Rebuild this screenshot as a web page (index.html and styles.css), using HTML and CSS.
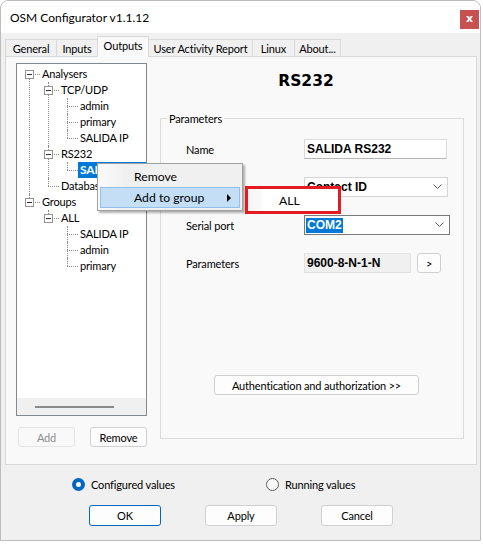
FILE: index.html
```html
<!DOCTYPE html>
<html>
<head>
<meta charset="utf-8">
<link rel="stylesheet" href="styles.css">
</head>
<body>
<div class="window">
  <div class="titlebar">
    <span class="title">OSM Configurator v1.1.12</span>
    <span class="close">x</span>
  </div>
  <div class="tabs">
    <div class="tab w-general">General</div>
    <div class="tab w-inputs">Inputs</div>
    <div class="tab w-outputs active">Outputs</div>
    <div class="tab w-uar">User Activity Report</div>
    <div class="tab w-linux">Linux</div>
    <div class="tab w-about">About...</div>
  </div>
  <div class="panel">
    <div class="left">
      <div class="tree">
        <div class="tree-content">
          <ul>
            <li><div class="row"><span class="exp"></span><span class="label">Analysers</span></div>
              <ul>
                <li><div class="row"><span class="exp"></span><span class="label">TCP/UDP</span></div>
                  <ul>
                    <li><div class="row"><span class="label">admin</span></div></li>
                    <li><div class="row"><span class="label">primary</span></div></li>
                    <li><div class="row"><span class="label">SALIDA IP</span></div></li>
                  </ul>
                </li>
                <li><div class="row"><span class="exp"></span><span class="label">RS232</span></div>
                  <ul>
                    <li><div class="row"><span class="label sel">SALIDA RS232</span></div></li>
                  </ul>
                </li>
                <li><div class="row"><span class="label">Database</span></div></li>
              </ul>
            </li>
            <li><div class="row"><span class="exp"></span><span class="label">Groups</span></div>
              <ul>
                <li><div class="row"><span class="exp"></span><span class="label">ALL</span></div>
                  <ul>
                    <li><div class="row"><span class="label">SALIDA IP</span></div></li>
                    <li><div class="row"><span class="label">admin</span></div></li>
                    <li><div class="row"><span class="label">primary</span></div></li>
                  </ul>
                </li>
              </ul>
            </li>
          </ul>
        </div>
        <div class="hscroll"><div class="thumb"></div></div>
      </div>
      <div class="left-buttons">
        <div class="btn small disabled">Add</div>
        <div class="btn small">Remove</div>
      </div>
    </div>
    <div class="right">
      <h1 class="heading">RS232</h1>
      <fieldset class="group">
        <legend>Parameters</legend>
        <div class="form">
          <div class="lbl">Name</div>
          <div class="input">SALIDA RS232</div>
          <div class="lbl">Protocol</div>
          <div class="combo"><span class="val">Contact ID</span><svg width="9" height="6" viewBox="0 0 9 6"><polyline points="0.5,0.5 4.5,4.5 8.5,0.5" fill="none" stroke="#606060" stroke-width="1"/></svg></div>
          <div class="lbl">Serial port</div>
          <div class="combo focus"><span class="val hl">COM2</span><svg width="9" height="6" viewBox="0 0 9 6"><polyline points="0.5,0.5 4.5,4.5 8.5,0.5" fill="none" stroke="#606060" stroke-width="1"/></svg></div>
          <div class="lbl">Parameters</div>
          <div class="param-row"><div class="ro">9600-8-N-1-N</div><div class="btn tiny">&gt;</div></div>
        </div>
        <div class="btn auth">Authentication and authorization &gt;&gt;</div>
      </fieldset>
    </div>
  </div>
  <div class="radios">
    <div class="radio-item first"><span class="radio on"></span><span>Configured values</span></div>
    <div class="radio-item"><span class="radio off"></span><span>Running values</span></div>
  </div>
  <div class="buttons">
    <div class="btn big default">OK</div>
    <div class="btn big">Apply</div>
    <div class="btn big">Cancel</div>
  </div>

  <div class="ctx">
    <div class="mi">Remove</div>
    <div class="mi hi">Add to group<span class="arrow"></span></div>
  </div>
  <div class="sub">
    <div class="sub-item">ALL</div>
  </div>
</div>
</body>
</html>
```

FILE: styles.css
```css
* { box-sizing: border-box; }
body {
  margin: 0;
  background: #fff;
  font-family: Lato, "Liberation Sans", sans-serif;
  font-size: 11px;
  letter-spacing: -0.15px;
  color: #000;
}
.window {
  position: relative;
  width: 481px;
  height: 541px;
  border: 1px solid #bcbcbc;
  border-radius: 8px 8px 0 0;
  background: #f0f0f0;
  overflow: hidden;
}
.titlebar {
  height: 32px;
  background: #fff;
  display: flex;
  justify-content: space-between;
  align-items: center;
  padding: 0 1px 0 9px;
}
.title { font-size: 12px; letter-spacing: 0; }
.close {
  align-self: flex-start;
  margin-top: 9px;
  width: 19px;
  height: 19px;
  background: #c75050;
  color: #fff;
  font: bold 11px "DejaVu Sans", sans-serif;
  display: flex;
  align-items: center;
  justify-content: center;
  padding-bottom: 2px;
}
.tabs {
  display: flex;
  align-items: flex-end;
  height: 23px;
  padding-left: 4px;
}
.tab {
  height: 17px;
  border: 1px solid #d9d9d9;
  border-bottom: none;
  margin-right: -1px;
  background: #f0f0f0;
  display: flex;
  align-items: center;
  justify-content: center;
  white-space: nowrap;
}
.tab.active {
  height: 21px;
  margin-bottom: -1px;
  background: #f9f9f9;
  position: relative;
  z-index: 1;
  padding-bottom: 4px;
}
.w-general { width: 52px; }
.w-inputs { width: 42px; }
.w-outputs { width: 52px; }
.w-uar { width: 105px; }
.w-linux { width: 43px; }
.w-about { width: 47px; }

.panel {
  margin-left: 4px;
  width: 472px;
  height: 409px;
  border: 1px solid #d9d9d9;
  background: #f9f9f9;
  display: flex;
  gap: 13px;
  padding: 6px 12px 16px 10px;
}
.left { width: 131px; display: flex; flex-direction: column; }
.tree {
  height: 353px;
  border: 1px solid #828790;
  background: #fff;
  display: flex;
  flex-direction: column;
}
.tree-content { flex: 1; overflow: hidden; padding-top: 2px; }
.tree ul { list-style: none; margin: 0; padding: 0; }
.tree ul ul { padding-left: 19px; }
.tree li { position: relative; }
.tree li::before {
  content: "";
  position: absolute;
  left: 12px;
  top: 0;
  bottom: 0;
  border-left: 1px dotted #8c8c8c;
}
.tree li:last-child::before { bottom: auto; height: 8px; }
.tree-content > ul > li:first-child::before { top: 8px; }
.row {
  position: relative;
  height: 16px;
  display: flex;
  align-items: center;
  padding-left: 23px;
  white-space: nowrap;
}
.row::before {
  content: "";
  position: absolute;
  left: 12px;
  top: 8px;
  width: 11px;
  border-top: 1px dotted #8c8c8c;
}
.exp {
  position: absolute;
  left: 8px;
  top: 4px;
  width: 9px;
  height: 9px;
  border: 1px solid #939393;
  background: #fff;
  z-index: 1;
}
.exp::after {
  content: "";
  position: absolute;
  left: 1px;
  top: 3px;
  width: 5px;
  height: 1px;
  background: #2c2c2c;
}
.label { padding: 0 2px; line-height: 16px; height: 16px; }
.label.sel { background: #0078d7; color: #fff; font-weight: bold; font-size: 12px; }
.hscroll { height: 17px; background: #f0f0f0; padding-top: 8px; }
.thumb { margin-left: 18px; width: 79px; height: 2px; background: #8a8a8a; }

.left-buttons { display: flex; gap: 15px; margin-top: 11px; padding-left: 2px; }

.btn {
  background: #fdfdfd;
  border: 1px solid #d0d0d0;
  border-radius: 3px;
  display: flex;
  align-items: center;
  justify-content: center;
  height: 20px;
}
.btn.small { width: 57px; }
.btn.disabled { color: #8d8d8d; border-color: #e5e5e5; background: #f9f9f9; }
.btn.tiny { width: 24px; margin-left: 6px; }
.btn.auth { width: 205px; margin: 102px 0 0 53px; }
.btn.big { width: 72px; height: 21px; }
.btn.default { border-color: #0067c0; }

.right { width: 304px; display: flex; flex-direction: column; }
.heading {
  margin: 8px 12px 0 0;
  font: bold 15.5px "DejaVu Sans", sans-serif;
  letter-spacing: 0;
  line-height: 20px;
  text-align: center;
}
.group {
  margin: 20px 0 9px;
  flex: 1;
  border: 1px solid #dcdcdc;
  padding: 13px 0 0 0;
  min-width: 0;
}
.group legend { margin-left: 6px; padding: 0 2px; line-height: 15px; }
.form {
  display: grid;
  grid-template-columns: 118px auto;
  grid-auto-rows: 20px;
  row-gap: 18px;
  align-items: center;
  margin-left: 25px;
}
.input, .combo, .ro {
  height: 20px;
  display: flex;
  align-items: center;
  font: bold 12px "Liberation Sans", sans-serif;
  letter-spacing: 0;
}
.input {
  width: 143px;
  background: #fff;
  border: 1px solid #dadada;
  border-bottom-color: #b5b5b5;
  padding-left: 2px;
}
.combo {
  width: 144px;
  background: #fff;
  border: 1px solid #d5d5d5;
  justify-content: space-between;
  padding: 0 5px 0 1px;
}
.combo.focus { width: 146px; border-color: #7a7a7a; }
.val { padding: 0 1px; line-height: 15px; }
.hl { background: #0078d7; color: #fff; }
.param-row { display: flex; align-items: center; }
.ro {
  width: 107px;
  background: #f0f0f0;
  border: 1px solid #e2e2e2;
  padding-left: 2px;
}

.radios {
  display: flex;
  align-items: center;
  height: 14px;
  margin-top: 12px;
  padding-left: 71px;
}
.radio-item { display: flex; align-items: center; gap: 6px; }
.radio-item.first { width: 194px; }
.radio { width: 13px; height: 13px; border-radius: 50%; position: relative; }
.radio.on { background: #0067c0; }
.radio.on::after {
  content: "";
  position: absolute;
  left: 4px;
  top: 4px;
  width: 5px;
  height: 5px;
  border-radius: 50%;
  background: #fff;
}
.radio.off { border: 1px solid #5c5c5c; background: #fafafa; }

.buttons { display: flex; gap: 44px; margin-top: 14px; padding-left: 88px; }

.ctx {
  position: absolute;
  left: 96px;
  top: 162px;
  width: 146px;
  height: 48px;
  border: 1px solid #a0a0a0;
  background: linear-gradient(to right, #fbfbfb 0, #f1f1f1 25px, #f0f0f0 25px);
  box-shadow: 2px 2px 2px rgba(0, 0, 0, 0.3);
  padding: 2px;
}
.mi {
  position: relative;
  height: 21px;
  display: flex;
  align-items: center;
  padding-left: 34px;
  font-size: 12.2px;
  letter-spacing: 0;
}
.mi.hi { background: #c3def5; border: 1px solid #8fc0ee; padding-left: 33px; }
.arrow {
  position: absolute;
  left: 126px;
  top: 6px;
  border-left: 4px solid #000;
  border-top: 4px solid transparent;
  border-bottom: 4px solid transparent;
}
.sub {
  position: absolute;
  left: 244px;
  top: 185px;
  width: 96px;
  height: 28px;
  border: 3px solid #e31b23;
  background: linear-gradient(to right, #f3f3f3 0, #fbfbfb 14px, #fff 14px);
}
.sub-item {
  height: 22px;
  display: flex;
  align-items: center;
  padding-left: 31px;
  font-size: 12.2px;
  letter-spacing: 0;
}
```
